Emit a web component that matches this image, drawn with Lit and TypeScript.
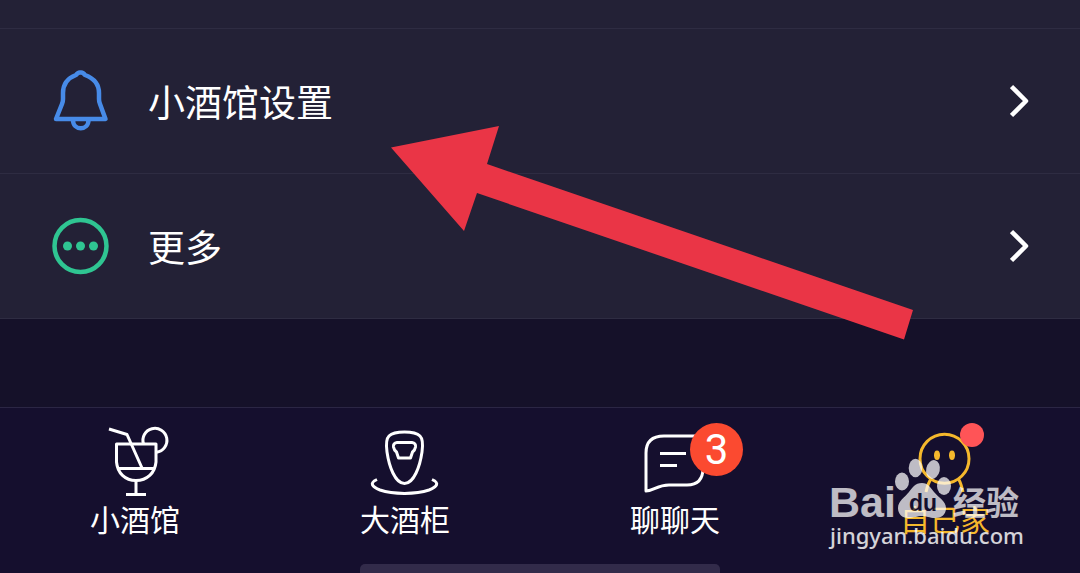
import { LitElement, html, css, svg } from "lit";
import { customElement, property } from "lit/decorators.js";

const bell = svg`
  <path d="M6 50 L12 35 Q13 33 13 30 V24 C13 15 18 9 26 6 Q28 3 30.500 3.500 Q33 3 35 6 C43 9 49 15 49 24 V30 Q49 33 50 35 L55.500 50 Z"/>
  <path d="M23 51 C23 62 38.500 62 38.500 51"/>`;

const dots = svg`
  <circle cx="30.500" cy="32" r="26"/>
  <g fill="currentColor" stroke="none">
    <circle cx="17.500" cy="32" r="4.500"/><circle cx="30.500" cy="32" r="4.500"/><circle cx="43.500" cy="32" r="4.500"/>
  </g>`;

const cocktail = svg`
  <path d="M14 9 L32 14.500 L47 48"/>
  <path d="M21.500 24 H61 V42 C60 53 52 60.500 41 60.500 S22.500 53 21.500 42 Z"/>
  <path d="M24 48.500 H59 M41 61 V74.500 M31 74.500 H51"/>
  <path d="M48.500 24 A12 12 0 1 1 61.500 32.200"/>`;

const decanter = svg`
  <path d="M39.500 12 C47 12 52 13 55 16 C58 19 58 25 57 32 C55 46 49 63.500 39.500 63.500 S24 46 22 32 C21 25 21 19 24 16 C27 13 32 12 39.500 12 Z"/>
  <path d="M32 22.500 H47 Q51 23 50.500 27 Q50 30 47.500 32 L45.500 38 H33.500 L31.500 32 Q29 30 28.500 27 Q28 23 32 22.500 Z"/>
  <path d="M12 59.500 C4 63 7 67 15 70 C28 74.500 51 74.500 64 70 C72 67 75 63 67 59.500"/>`;

const chat = svg`
  <path d="M60 16 H29 C17 16 11 22 11 33 V71 C19 71 22 65 34 65 H52 C62 65 68 60 68 48"/>
  <path d="M25 33.500 H51 M25 45.500 H42"/>`;

const face = svg`
  <circle cx="39.500" cy="38.700" r="24.500"/>
  <g fill="currentColor" stroke="none">
    <ellipse cx="32" cy="35.300" rx="3" ry="4.700"/><ellipse cx="47" cy="35.300" rx="3" ry="4.700"/>
  </g>
  <path d="M26 59 Q23 63 21 72 M53.500 59 Q56 63 58 72"/>`;

@customElement("settings-row")
class SettingsRow extends LitElement {
  @property() label = "";
  @property({ attribute: false }) icon: unknown;

  static styles = css`
    :host { display: block; }
    .row {
      display: flex;
      align-items: center;
      gap: 36px;
      width: 100%;
      box-sizing: border-box;
      padding: 40px 50px;
      border: 0;
      border-bottom: 1px solid #2e2c42;
      background: #232136;
      color: #fff;
      font: inherit;
      font-size: 37px;
      line-height: 64px;
      text-align: left;
    }
    .icon { flex: none; width: 62px; height: 64px; color: var(--icon); stroke-width: 4.5; }
    .label { flex: 1; }
    .chevron { flex: none; width: 20px; height: 36px; stroke-width: 4.5; }
    svg { fill: none; stroke: currentColor; stroke-linejoin: round; display: block; }
  `;

  render() {
    return html`<button class="row" type="button">
      <svg class="icon" viewBox="0 0 62 64" aria-hidden="true">${this.icon}</svg>
      <span class="label">${this.label}</span>
      <svg class="chevron" viewBox="0 0 20 36" aria-hidden="true"><path d="M1.500 3.500 L16 18 L1.500 32.500"/></svg>
    </button>`;
  }
}

@customElement("tab-link")
class TabLink extends LitElement {
  @property() label = "";
  @property() badge = "";
  @property({ type: Boolean }) dot = false;
  @property({ attribute: false }) icon: unknown;

  static styles = css`
    :host { display: block; color: #fff; }
    .tab {
      display: flex;
      flex-direction: column;
      align-items: center;
      padding: 12px 0 28px;
      color: inherit;
      text-decoration: none;
      font-size: 30px;
      line-height: 36px;
    }
    .art { position: relative; width: 80px; height: 80px; }
    svg { display: block; fill: none; stroke: currentColor; stroke-width: 3; stroke-linejoin: round; }
    .badge {
      position: absolute;
      left: 55px;
      top: 3px;
      width: 53px;
      height: 53px;
      border-radius: 50%;
      background: #fb4a30;
      font-size: 42px;
      line-height: 53px;
      font-family: Roboto, sans-serif;
      text-align: center;
    }
    .dot {
      position: absolute;
      left: 55px;
      top: 3px;
      width: 24px;
      height: 24px;
      border-radius: 50%;
      background: #ff5457;
    }
  `;

  render() {
    return html`<a class="tab" href="#">
      <span class="art">
        <svg width="80" height="80" viewBox="0 0 80 80" aria-hidden="true">${this.icon}</svg>
        ${this.badge ? html`<span class="badge">${this.badge}</span>` : null}
        ${this.dot ? html`<span class="dot"></span>` : null}
      </span>
      <span>${this.label}</span>
    </a>`;
  }
}

@customElement("app-root")
class AppRoot extends LitElement {
  static styles = css`
    :host {
      display: block;
      position: relative;
      overflow: hidden;
      background: #151129;
      font-family: "Noto Sans CJK SC", sans-serif;
    }
    .previous { height: 28px; background: #232136; border-bottom: 1px solid #2e2c42; }
    .blue { --icon: #478be8; }
    .green { --icon: #2fc592; }
    .bar { margin-top: 88px; border-top: 1px solid #2b2644; background: #150f2e; }
    .tabs { display: grid; grid-template-columns: repeat(4, 1fr); }
    .active { color: #f5b82c; }
    .handle { width: 33.333%; height: 9px; margin: 0 auto; border-radius: 5px 5px 0 0; background: #322b4a; }
    .arrow { position: absolute; left: 390px; top: 125px; fill: #ea3546; pointer-events: none; }
    .mark {
      position: absolute;
      right: 56px;
      top: 456px;
      width: 195px;
      color: #fff;
      pointer-events: none;
    }
    .brand { display: flex; align-items: flex-end; height: 64px; font-weight: 700; opacity: 0.72; }
    .latin { width: 66px; font-family: "Liberation Sans", sans-serif; font-size: 43px; line-height: 36px; }
    .paw { display: block; flex: none; width: 58px; height: 64px; fill: currentColor; }
    .du { fill: #150f2e; font: 700 23px "Liberation Sans", sans-serif; }
    .han { font-size: 33px; line-height: 38px; white-space: nowrap; }
    .site {
      display: block;
      padding-left: 1px;
      font-family: "Noto Sans", sans-serif;
      font-size: 22px;
      font-weight: 500;
      line-height: 30px;
      white-space: nowrap;
      opacity: 0.82;
    }
  `;

  render() {
    return html`
      <main>
        <div class="previous"></div>
        <settings-row class="blue" label="小酒馆设置" .icon=${bell}></settings-row>
        <settings-row class="green" label="更多" .icon=${dots}></settings-row>
      </main>
      <footer class="bar">
        <nav class="tabs">
          <tab-link label="小酒馆" .icon=${cocktail}></tab-link>
          <tab-link label="大酒柜" .icon=${decanter}></tab-link>
          <tab-link label="聊聊天" badge="3" .icon=${chat}></tab-link>
          <tab-link class="active" label="自己家" dot .icon=${face}></tab-link>
        </nav>
        <div class="handle"></div>
      </footer>
      <svg class="arrow" width="524" height="216" viewBox="390 125 524 216" aria-hidden="true">
        <path d="M391 147.500 L499 126 L487 164 L913 310 L904 339.500 L477 193 L464 231 Z"/>
      </svg>
      <div class="mark">
        <div class="brand">
          <span class="latin">Bai</span>
          <svg class="paw" viewBox="895 456 58 64" aria-hidden="true">
            <ellipse cx="902" cy="481.500" rx="7" ry="9"/>
            <ellipse cx="915.500" cy="468" rx="6.800" ry="9.200"/>
            <ellipse cx="933" cy="469.500" rx="6.800" ry="9.500" transform="rotate(12 933 469.500)"/>
            <ellipse cx="944" cy="486" rx="7" ry="9"/>
            <path d="M922 483 C928 483 931 488 934 492 C938 497 946 501 946 508 C946 515 941 518 935 518 C929 518 927 516 922 516 S914 518 908 518 C902 518 898 514 898 508 C898 501 905 497 909 492 C912 488 915 483 922 483 Z"/>
            <text class="du" x="909" y="511">du</text>
          </svg>
          <span class="han">经验</span>
        </div>
        <span class="site">jingyan.baidu.com</span>
      </div>
    `;
  }
}
